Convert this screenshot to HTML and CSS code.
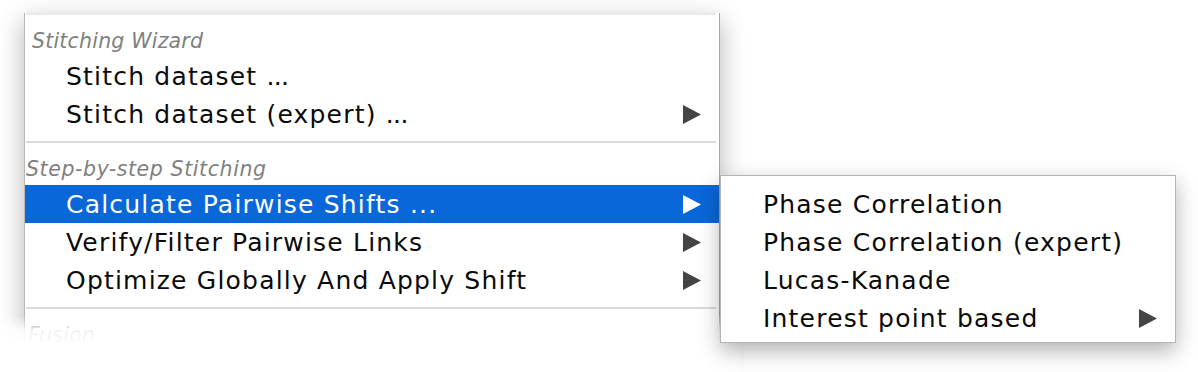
FILE: index.html
```html
<!DOCTYPE html>
<html>
<head>
<meta charset="utf-8">
<link rel="stylesheet" href="styles.css">
</head>
<body>
<div class="stage">
  <div class="menu">
    <div class="sep sep--top"><div class="sep-line sep-line--light"></div></div>
    <div class="hdr">Stitching Wizard</div>
    <div class="item"><span class="label">Stitch dataset <span class="dots">...</span></span></div>
    <div class="item"><span class="label">Stitch dataset (expert) <span class="dots">...</span></span>
      <svg class="arrow" viewBox="0 0 18 19"><polygon points="0,0 18,9.5 0,19"/></svg></div>
    <div class="sep"><div class="sep-line"></div></div>
    <div class="hdr hdr--flush">Step-by-step Stitching</div>
    <div class="item item--active"><span class="label">Calculate Pairwise Shifts ...</span>
      <svg class="arrow" viewBox="0 0 18 19"><polygon points="0,0 18,9.5 0,19"/></svg></div>
    <div class="item"><span class="label">Verify/Filter Pairwise Links</span>
      <svg class="arrow" viewBox="0 0 18 19"><polygon points="0,0 18,9.5 0,19"/></svg></div>
    <div class="item"><span class="label">Optimize Globally And Apply Shift</span>
      <svg class="arrow" viewBox="0 0 18 19"><polygon points="0,0 18,9.5 0,19"/></svg></div>
    <div class="sep"><div class="sep-line"></div></div>
    <div class="hdr hdr--mid">Fusion</div>
  </div>
  <div class="fade"></div>
  <div class="submenu">
    <div class="item item--sub"><span class="label">Phase Correlation</span></div>
    <div class="item item--sub"><span class="label">Phase Correlation (expert)</span></div>
    <div class="item item--sub"><span class="label">Lucas-Kanade</span></div>
    <div class="item item--sub"><span class="label">Interest point based</span>
      <svg class="arrow" viewBox="0 0 18 19"><polygon points="0,0 18,9.5 0,19"/></svg></div>
  </div>
</div>
</body>
</html>
```
FILE: styles.css
```css
html, body {
  margin: 0;
  padding: 0;
  background: #ffffff;
  overflow: hidden;
}
body {
  font-family: "DejaVu Sans", "Liberation Sans", sans-serif;
}
.stage {
  position: relative;
  width: 1198px;
  height: 372px;
  overflow: hidden;
}
.menu {
  margin: 13px 0 0 24px;
  width: 694px;
  height: 360px;
  background: #fff;
  border-left: 1px solid #b8b8b8;
  border-right: 1px solid #a8a8a8;
  box-shadow: 0 8px 24px rgba(0, 0, 0, 0.3);
  display: flex;
  flex-direction: column;
}
.sep {
  padding: 8px 3px 10px 1px;
}
.sep--top {
  padding-top: 0;
}
.sep-line {
  height: 2px;
  background: #dadada;
}
.sep-line--light {
  background: #e9e9e9;
}
.hdr {
  height: 32px;
  line-height: 32px;
  padding-left: 7px;
  font-style: italic;
  font-size: 20.5px;
  letter-spacing: 0.2px;
  color: #7f7f7f;
}
.hdr--flush {
  padding-left: 1px;
  letter-spacing: 0.6px;
}
.hdr--mid {
  padding-left: 3px;
}
.item {
  height: 38px;
  display: flex;
  align-items: center;
  justify-content: space-between;
  padding: 0 18px 0 41px;
  font-size: 25px;
  letter-spacing: 1.2px;
  color: #0a0a0a;
}
.dots {
  letter-spacing: -0.6px;
}
.item--active {
  background: #0a67d9;
  color: #fff;
}
.arrow {
  width: 18px;
  height: 19px;
  fill: #444;
}
.item--active .arrow {
  fill: #fff;
}
.fade {
  position: absolute;
  left: 0;
  top: 316px;
  width: 740px;
  height: 56px;
  background: linear-gradient(to bottom, rgba(255,255,255,0) 0, rgba(255,255,255,0.88) 14px, #fff 30px);
  z-index: 1;
}
.submenu {
  position: absolute;
  left: 720px;
  top: 175px;
  width: 454px;
  padding: 9px 0 5px;
  background: #fff;
  border: 1px solid #b4b4b4;
  box-shadow: 0 8px 20px rgba(0, 0, 0, 0.3);
  z-index: 2;
}
.item--sub {
  padding-left: 42px;
}
```
